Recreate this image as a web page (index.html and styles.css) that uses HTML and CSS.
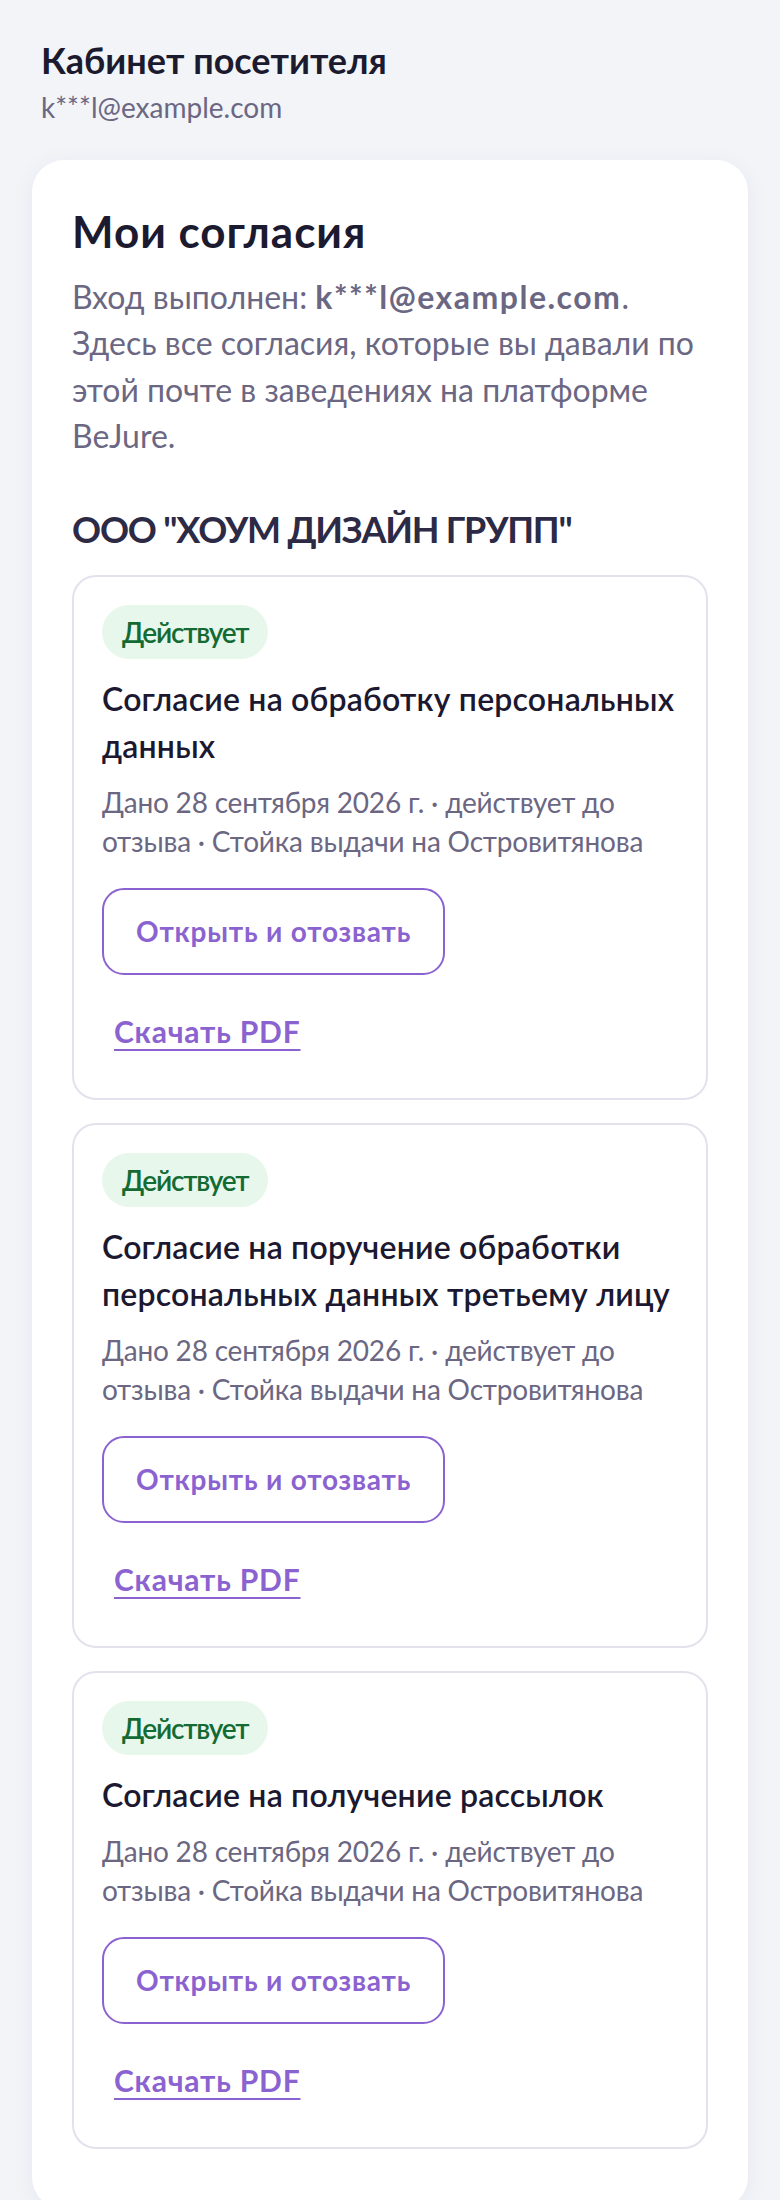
FILE: index.html
```html
<!DOCTYPE html>
<html lang="ru">
<head>
<meta charset="utf-8">
<title>Кабинет посетителя</title>
<link rel="stylesheet" href="styles.css">
</head>
<body>
<header class="top">
  <div class="top-title">Кабинет посетителя</div>
  <div class="top-email">k***l@example.com</div>
</header>
<main class="panel">
  <h1 class="panel-title">Мои согласия</h1>
  <p class="intro">Вход выполнен: <b>k***l@example.com</b>.<br>Здесь все согласия, которые вы давали по этой почте в заведениях на платформе BeJure.</p>

  <h2 class="org">ООО "ХОУМ ДИЗАЙН ГРУПП"</h2>
  <div class="list">
    <section class="consent">
      <span class="badge">Действует</span>
      <h3 class="c-title">Согласие на обработку персональных данных</h3>
      <p class="c-meta">Дано 28 сентября 2026 г. · действует до отзыва · Стойка выдачи на Островитянова</p>
      <div class="c-actions"><button class="btn" type="button">Открыть и отозвать</button></div>
      <div class="c-link"><a class="pdf" href="#">Скачать PDF</a></div>
    </section>
    <section class="consent">
      <span class="badge">Действует</span>
      <h3 class="c-title">Согласие на поручение обработки персональных данных третьему лицу</h3>
      <p class="c-meta">Дано 28 сентября 2026 г. · действует до отзыва · Стойка выдачи на Островитянова</p>
      <div class="c-actions"><button class="btn" type="button">Открыть и отозвать</button></div>
      <div class="c-link"><a class="pdf" href="#">Скачать PDF</a></div>
    </section>
    <section class="consent">
      <span class="badge">Действует</span>
      <h3 class="c-title">Согласие на получение рассылок</h3>
      <p class="c-meta">Дано 28 сентября 2026 г. · действует до отзыва · Стойка выдачи на Островитянова</p>
      <div class="c-actions"><button class="btn" type="button">Открыть и отозвать</button></div>
      <div class="c-link"><a class="pdf" href="#">Скачать PDF</a></div>
    </section>
  </div>
</main>
</body>
</html>
```
FILE: styles.css
```css
* { box-sizing: border-box; }

html, body {
  margin: 0;
  padding: 0;
  background: #f2f4f8;
}

body {
  font-family: Lato, "Noto Sans", sans-serif;
  color: #1b1830;
  padding-bottom: 40px;
}

.top {
  padding: 37px 41px 0;
}

.top-title {
  font-size: 36px;
  line-height: 47px;
  font-weight: 700;
  color: #1c1a2e;
}

.top-email {
  margin-top: 4px;
  font-size: 28px;
  line-height: 39px;
  color: #6b6783;
}

.panel {
  margin: 33px 32px 0;
  padding: 40px 40px 60px;
  background: #ffffff;
  border-radius: 32px;
  box-shadow: 0 4px 24px rgba(40, 40, 90, 0.05);
}

.panel-title {
  margin: 0;
  font-size: 44px;
  line-height: 62px;
  font-weight: 700;
  letter-spacing: 1px;
  color: #1c1a2e;
}

.intro {
  margin: 12px 0 0;
  font-size: 32px;
  line-height: 46.4px;
  color: #6b6783;
}

.intro b {
  font-weight: 700;
  letter-spacing: 1.5px;
  color: #6b6783;
}

.org {
  margin: 46px 0 0;
  font-size: 36px;
  line-height: 47px;
  font-weight: 700;
  letter-spacing: -1.2px;
  color: #2d2a46;
}

.list {
  margin-top: 22px;
  display: flex;
  flex-direction: column;
  gap: 23px;
}

.consent {
  border: 2px solid #e3e2ec;
  border-radius: 24px;
  padding: 28px;
  background: #ffffff;
}

.badge {
  display: inline-block;
  padding: 10px 20px;
  font-size: 28px;
  line-height: 34px;
  font-weight: 600;
  letter-spacing: -1.2px;
  color: #136b33;
  background: #e7f7ec;
  border-radius: 999px;
}

.c-title {
  margin: 16px 0 0;
  font-size: 32px;
  line-height: 47px;
  font-weight: 600;
  letter-spacing: 0.2px;
  color: #1b1830;
}

.c-meta {
  margin: 14px 0 0;
  font-size: 28px;
  line-height: 39px;
  letter-spacing: -0.2px;
  color: #6b6783;
}

.c-actions {
  margin-top: 27px;
}

.btn {
  display: inline-block;
  margin: 0;
  padding: 24px 32px;
  font-family: inherit;
  font-size: 28px;
  line-height: 35px;
  font-weight: 700;
  letter-spacing: 0.8px;
  color: #8b63d0;
  background: #ffffff;
  border: 2px solid #8b63d0;
  border-radius: 22px;
}

.c-link {
  margin-top: 26px;
  margin-bottom: 9px;
}

.pdf {
  display: inline-block;
  padding: 12px;
  font-size: 30px;
  line-height: 36px;
  font-weight: 700;
  letter-spacing: 0.8px;
  color: #8b63d0;
  text-decoration: underline;
  text-decoration-thickness: 2px;
  text-underline-offset: 6px;
}
```
